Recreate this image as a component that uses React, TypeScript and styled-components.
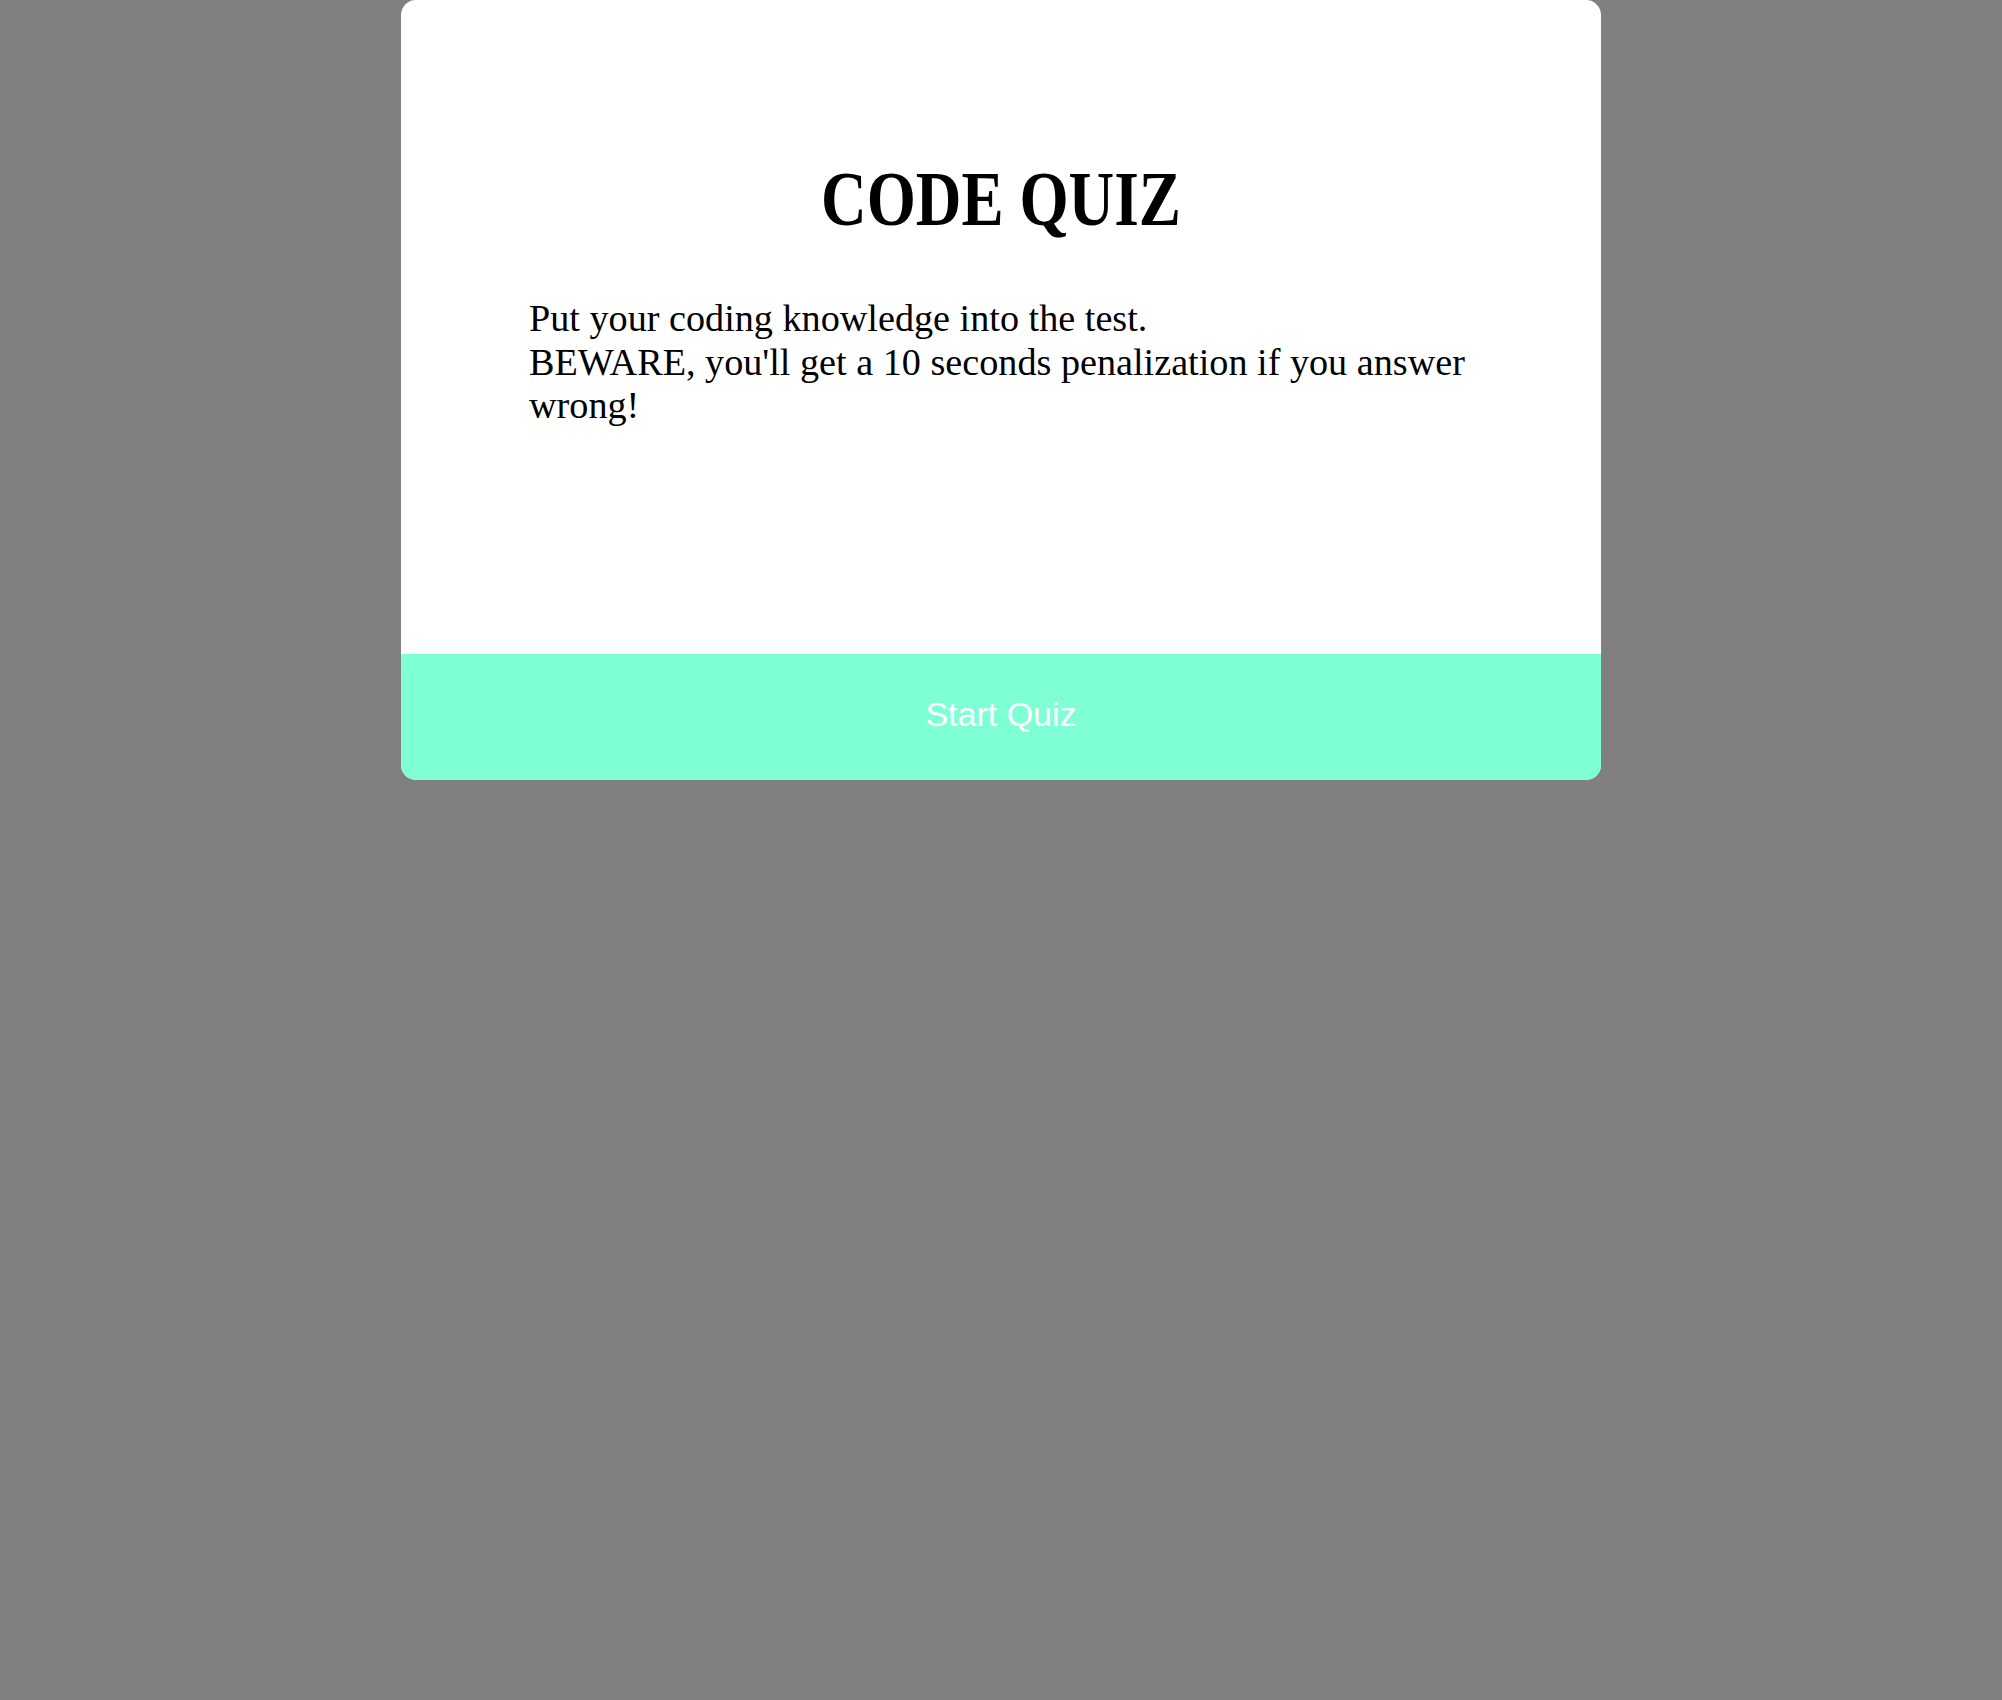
import React from "react";
import styled, { createGlobalStyle } from "styled-components";

const GlobalStyle = createGlobalStyle`
  html, body {
    margin: 0;
    padding: 0;
    background: #808080;
  }
  body {
    font-family: "Liberation Serif", "Times New Roman", serif;
    min-height: 1700px;
  }
`;

const Page = styled.main`
  display: flex;
  justify-content: center;
`;

const Card = styled.section`
  width: 1200px;
  display: flex;
  flex-direction: column;
  background: #ffffff;
  border-radius: 15px;
  overflow: hidden;
`;

const Content = styled.div`
  box-sizing: border-box;
  height: 654px;
  padding: 154px 128px 0;
  display: flex;
  flex-direction: column;
  gap: 53px;
`;

const Title = styled.h1`
  margin: 0;
  font-family: "Liberation Serif", "Times New Roman", serif;
  font-weight: 700;
  font-size: 79px;
  line-height: 90px;
  text-align: center;
  color: #000;
  transform: scaleX(0.8);
`;

const Intro = styled.p`
  margin: 0;
  font-family: "Liberation Serif", "Times New Roman", serif;
  font-size: 38.2px;
  line-height: 43.5px;
  color: #000;
`;

const StartButton = styled.button`
  display: flex;
  align-items: center;
  justify-content: center;
  box-sizing: border-box;
  width: 100%;
  height: 126px;
  padding: 0 0 6px;
  border: none;
  background: #7fffd4;
  color: #ffffff;
  font-family: "Liberation Sans", Arial, sans-serif;
  font-size: 34px;
  cursor: pointer;
`;

export default function App() {
  return (
    <>
      <GlobalStyle />
      <Page>
        <Card>
          <Content>
            <Title>CODE QUIZ</Title>
            <Intro>
              Put your coding knowledge into the test.
              <br />
              BEWARE, you'll get a 10 seconds penalization if you answer wrong!
            </Intro>
          </Content>
          <StartButton type="button">Start Quiz</StartButton>
        </Card>
      </Page>
    </>
  );
}
